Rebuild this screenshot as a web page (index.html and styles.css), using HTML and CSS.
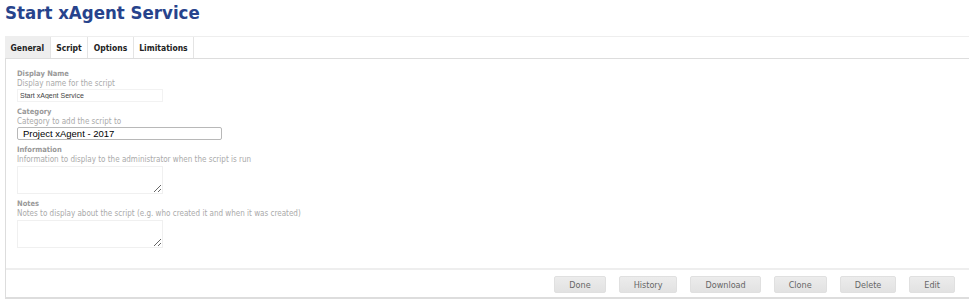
FILE: index.html
```html
<!DOCTYPE html>
<html>
<head>
    <link rel="stylesheet" href="styles.css">
</head>
<body>
    <h1 class="title">Start xAgent Service</h1>
    <div class="tabs">
        <span class="tab active">General</span>
        <span class="tab">Script</span>
        <span class="tab">Options</span>
        <span class="tab">Limitations</span>
    </div>
    <div class="panel">
        <div class="fields">
            <div class="field">
                <label>Display Name</label>
                <div class="desc">Display name for the script</div>
                <input type="text" class="name-input" value="Start xAgent Service">
            </div>
            <div class="field">
                <label>Category</label>
                <div class="desc">Category to add the script to</div>
                <input type="text" class="cat-input" value="Project xAgent - 2017">
            </div>
            <div class="field">
                <label>Information</label>
                <div class="desc">Information to display to the administrator when the script is run</div>
                <textarea></textarea>
            </div>
            <div class="field">
                <label>Notes</label>
                <div class="desc">Notes to display about the script (e.g. who created it and when it was created)</div>
                <textarea></textarea>
            </div>
        </div>
        <div class="actions">
            <button type="button">Done</button>
            <button type="button">History</button>
            <button type="button">Download</button>
            <button type="button">Clone</button>
            <button type="button">Delete</button>
            <button type="button">Edit</button>
        </div>
    </div>
</body>
</html>
```

FILE: styles.css
```css
body {
    margin: 0;
    padding: 0 0 0 5px;
    font-family: "DejaVu Sans Condensed", "DejaVu Sans", Verdana, sans-serif;
    background-color: #fff;
    overflow: hidden;
}

.title {
    margin: 0;
    height: 36px;
    padding-top: 2px;
    box-sizing: border-box;
    font-size: 18.5px;
    font-weight: bold;
    color: #27438c;
}

.tabs {
    display: flex;
    height: 21px;
    border-top: 1px solid #eee;
    border-bottom: 1px solid #ddd;
}

.tab {
    display: flex;
    align-items: center;
    padding: 0 5.5px;
    font-size: 8.5px;
    font-weight: bold;
    color: #222;
    border-right: 1px solid #e4e4e4;
}

.tab.active {
    background-color: #eee;
}

.panel {
    border-left: 1px solid #ddd;
    border-bottom: 2px solid #ddd;
}

.fields {
    padding: 10px 11px 15px;
    border-bottom: 2px solid #eee;
}

.field {
    margin-bottom: 5px;
}

.field label {
    display: block;
    font-size: 7.5px;
    font-weight: bold;
    color: #999;
    line-height: 10px;
}

.desc {
    font-size: 8px;
    color: #aaa;
    line-height: 9px;
}

input[type="text"],
textarea {
    display: block;
    margin: 1px 0 0;
    box-sizing: border-box;
    font-family: "Liberation Sans", Arial, sans-serif;
}

.name-input {
    width: 146px;
    height: 13px;
    padding: 0 2px;
    font-size: 7px;
    color: #444;
    border: 1px solid #f2f2f2;
}

.cat-input {
    width: 205px;
    height: 13px;
    padding: 0 5px;
    font-size: 9.5px;
    color: #000;
    border: 1px solid #b8b8b8;
    border-radius: 2px;
}

textarea {
    width: 146px;
    height: 28px;
    margin-top: 2px;
    border: 1px solid #f0f0f0;
    resize: vertical;
}

.actions {
    display: flex;
    justify-content: flex-end;
    gap: 13px;
    padding: 6px 14px 4px 0;
}

button {
    height: 17px;
    padding: 0 14px;
    font-family: "DejaVu Sans Condensed", "DejaVu Sans", Verdana, sans-serif;
    font-size: 9px;
    color: #666;
    background: linear-gradient(#ececec, #e2e2e2);
    border: 1px solid #e0e0e0;
    border-radius: 2px;
}
```
